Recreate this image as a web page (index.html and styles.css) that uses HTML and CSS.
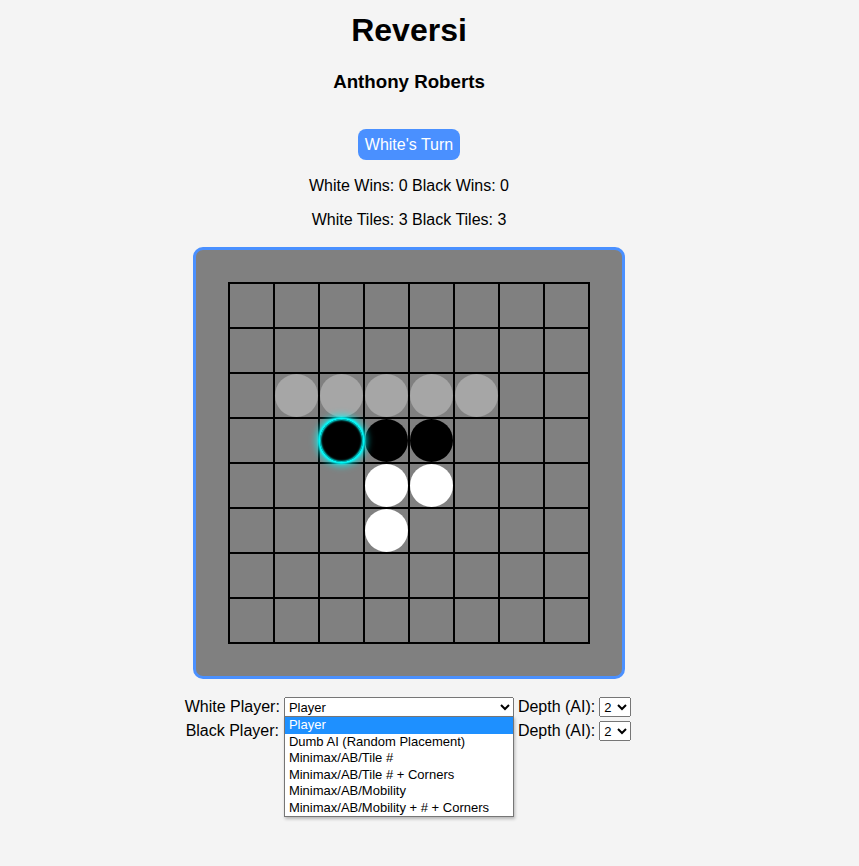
FILE: index.html
```html
<!DOCTYPE html>
<html lang="en">
<head>
<meta charset="utf-8">
<title>Reversi</title>
<link rel="stylesheet" href="styles.css">
</head>
<body>
<main class="page">
  <h1 class="title">Reversi</h1>
  <h3 class="author">Anthony Roberts</h3>
  <button class="turn">White's Turn</button>
  <p class="stat stat-wins">White Wins: 0 Black Wins: 0</p>
  <p class="stat stat-tiles">White Tiles: 3 Black Tiles: 3</p>

  <div class="board">
    <div class="grid">
      <div class="cell"></div><div class="cell"></div><div class="cell"></div><div class="cell"></div><div class="cell"></div><div class="cell"></div><div class="cell"></div><div class="cell"></div>
      <div class="cell"></div><div class="cell"></div><div class="cell"></div><div class="cell"></div><div class="cell"></div><div class="cell"></div><div class="cell"></div><div class="cell"></div>
      <div class="cell"></div><div class="cell"><span class="piece hint"></span></div><div class="cell"><span class="piece hint"></span></div><div class="cell"><span class="piece hint"></span></div><div class="cell"><span class="piece hint"></span></div><div class="cell"><span class="piece hint"></span></div><div class="cell"></div><div class="cell"></div>
      <div class="cell"></div><div class="cell"></div><div class="cell"><span class="piece black last"></span></div><div class="cell"><span class="piece black"></span></div><div class="cell"><span class="piece black"></span></div><div class="cell"></div><div class="cell"></div><div class="cell"></div>
      <div class="cell"></div><div class="cell"></div><div class="cell"></div><div class="cell"><span class="piece white"></span></div><div class="cell"><span class="piece white"></span></div><div class="cell"></div><div class="cell"></div><div class="cell"></div>
      <div class="cell"></div><div class="cell"></div><div class="cell"></div><div class="cell"><span class="piece white"></span></div><div class="cell"></div><div class="cell"></div><div class="cell"></div><div class="cell"></div>
      <div class="cell"></div><div class="cell"></div><div class="cell"></div><div class="cell"></div><div class="cell"></div><div class="cell"></div><div class="cell"></div><div class="cell"></div>
      <div class="cell"></div><div class="cell"></div><div class="cell"></div><div class="cell"></div><div class="cell"></div><div class="cell"></div><div class="cell"></div><div class="cell"></div>
    </div>
  </div>

  <div class="controls">
    <label class="ctl-label">White Player:</label>
    <span class="select-wrap">
      <select class="player-select">
        <option selected>Player</option>
        <option>Dumb AI (Random Placement)</option>
        <option>Minimax/AB/Tile #</option>
        <option>Minimax/AB/Tile # + Corners</option>
        <option>Minimax/AB/Mobility</option>
        <option>Minimax/AB/Mobility + # + Corners</option>
      </select>
      <ul class="dropdown">
        <li class="opt active">Player</li>
        <li class="opt">Dumb AI (Random Placement)</li>
        <li class="opt">Minimax/AB/Tile #</li>
        <li class="opt">Minimax/AB/Tile # + Corners</li>
        <li class="opt">Minimax/AB/Mobility</li>
        <li class="opt">Minimax/AB/Mobility + # + Corners</li>
      </ul>
    </span>
    <label class="ctl-label">Depth (AI):</label>
    <select class="depth-select">
      <option>1</option><option selected>2</option><option>3</option><option>4</option><option>5</option>
    </select>

    <label class="ctl-label">Black Player:</label>
    <span class="select-wrap">
      <select class="player-select">
        <option selected>Player</option>
        <option>Dumb AI (Random Placement)</option>
        <option>Minimax/AB/Tile #</option>
        <option>Minimax/AB/Tile # + Corners</option>
        <option>Minimax/AB/Mobility</option>
        <option>Minimax/AB/Mobility + # + Corners</option>
      </select>
    </span>
    <label class="ctl-label">Depth (AI):</label>
    <select class="depth-select">
      <option>1</option><option selected>2</option><option>3</option><option>4</option><option>5</option>
    </select>
  </div>
</main>
</body>
</html>
```
FILE: styles.css
```css
html, body {
  margin: 0;
  padding: 0;
  background: #f4f4f4;
}
body {
  font-family: "Liberation Sans", Arial, sans-serif;
  color: #000;
  min-height: 100vh;
}
.page {
  width: 818px;
  min-height: 866px;
  padding-bottom: 40px;
  box-sizing: border-box;
  display: flex;
  flex-direction: column;
  align-items: center;
}
.title {
  font-size: 32px;
  line-height: 37px;
  font-weight: bold;
  margin: 12px 0 0;
}
.author {
  font-size: 18.72px;
  line-height: 22px;
  font-weight: bold;
  margin: 22px 0 0;
}
.turn {
  margin-top: 36px;
  background: #4a90ff;
  color: #fff;
  border: none;
  border-radius: 8px;
  font-family: "Liberation Sans", Arial, sans-serif;
  font-size: 16px;
  line-height: 19px;
  padding: 6px 7px;
  height: 31px;
}
.stat {
  font-size: 16px;
  line-height: 18px;
  margin: 0;
}
.stat-wins {
  margin-top: 17px;
}
.stat-tiles {
  margin-top: 16px;
}
.board {
  margin-top: 18px;
  width: 426px;
  height: 426px;
  box-sizing: content-box;
  border: 3px solid #4a90ff;
  border-radius: 10px;
  background: #808080;
  display: flex;
  align-items: center;
  justify-content: center;
}
.grid {
  display: grid;
  grid-template-columns: repeat(8, 43px);
  grid-template-rows: repeat(8, 43px);
  gap: 2px;
  padding: 2px;
  background: #000;
}
.cell {
  background: #808080;
  display: flex;
  align-items: center;
  justify-content: center;
}
.piece {
  display: block;
  width: 43px;
  height: 43px;
  border-radius: 50%;
  box-sizing: border-box;
}
.piece.black { background: #000; }
.piece.white { background: #fff; }
.piece.hint { background: #a6a6a6; }
.piece.last {
  box-shadow: inset 0 0 2px 1px #00ffff, 0 0 2px 2px #00ffff, 0 0 7px 4px rgba(0, 255, 255, 0.7);
  position: relative;
  z-index: 1;
}
.controls {
  margin-top: 18px;
  margin-right: 2px;
  display: grid;
  grid-template-columns: auto auto auto auto;
  column-gap: 4px;
  row-gap: 4px;
  justify-items: center;
  align-items: center;
  font-size: 16px;
}
.ctl-label {
  line-height: 20px;
}
.select-wrap {
  position: relative;
  display: inline-block;
}
.player-select {
  width: 230px;
  height: 20px;
  font-family: "Liberation Sans", Arial, sans-serif;
  font-size: 13px;
  display: block;
}
.depth-select {
  width: 32px;
  height: 20px;
  font-family: "Liberation Sans", Arial, sans-serif;
  font-size: 13px;
}
.dropdown {
  position: absolute;
  top: 19px;
  left: 0;
  width: 230px;
  box-sizing: border-box;
  margin: 0;
  padding: 0;
  list-style: none;
  background: #fff;
  border: 1px solid #767676;
  box-shadow: 1px 2px 3px rgba(0, 0, 0, 0.25);
  z-index: 5;
}
.opt {
  font-size: 13px;
  line-height: 16.5px;
  height: 16.5px;
  padding-left: 4px;
  white-space: nowrap;
  color: #000;
}
.opt.active {
  background: #1e90ff;
  color: #fff;
}
```
